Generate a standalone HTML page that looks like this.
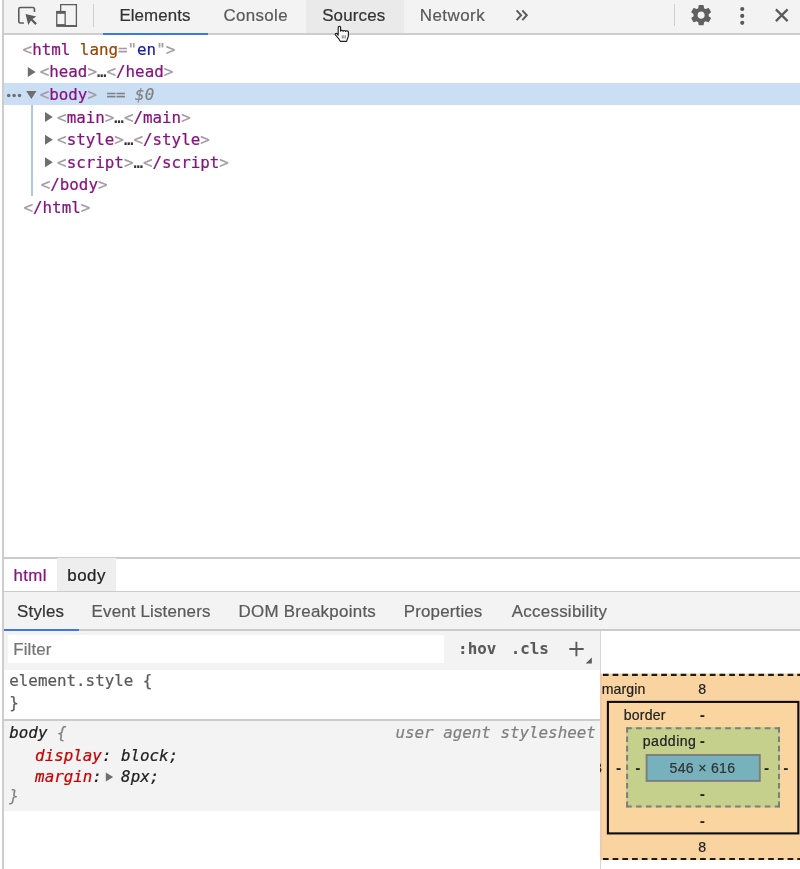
<!DOCTYPE html>
<html lang="en">
<head>
<meta charset="utf-8">
<title>DevTools</title>
<style>
html,body{margin:0;padding:0;}
body{width:800px;height:869px;position:relative;overflow:hidden;background:#fff;
  font-family:"Liberation Sans",Arial,sans-serif;color:#333;}
.abs{position:absolute;}
.mono{font-family:"DejaVu Sans Mono","Liberation Mono",monospace;font-size:15.85px;white-space:pre;line-height:22px;letter-spacing:0;}
.t{position:absolute;white-space:pre;line-height:1;-webkit-text-stroke:0.22px currentColor;}
/* colours */
.tag{color:#881280;}
.br{color:#a698a5;}
.an{color:#994500;}
.av{color:#1a1aa6;}
.gr{color:#5a5a5a;}
/* frame */
#leftline{left:2px;top:0;width:2px;height:869px;background:#cdcdcd;}
#toolbar{left:4px;top:0;width:796px;height:33.4px;background:#f3f3f3;}
#toolbar-b{left:4px;top:33.3px;width:796px;height:1.7px;background:#cdcdcd;}
#hover{left:306.2px;top:0;width:97.8px;height:33.4px;background:#eaeaea;}
.tab{font-size:16.9px;color:#5a5a5a;}
.ul{background:#3b78e7;height:2.6px;}
.vsep{width:1.2px;background:#cfcfcf;}
/* dom tree */
#sel{left:4px;top:83px;width:796px;height:22px;background:#cbdff4;}
#guide{left:30.7px;top:105px;width:2.1px;height:90.600px;background:#b4c3ec;}
.row{position:absolute;height:22px;}
.tri{position:absolute;width:0;height:0;}
.hy{font-weight:bold;}
/* lower */
.hline{height:1.5px;background:#cbcbcb;left:4px;width:796px;}
</style>
</head>
<body>
<div id="root" style="position:absolute;left:0;top:0;width:800px;height:869px;will-change:transform;">
<div id="leftline" class="abs"></div>

<!-- main toolbar -->
<div id="toolbar" class="abs"></div>
<div id="hover" class="abs"></div>
<div id="toolbar-b" class="abs"></div>
<div class="abs ul" style="left:103px;top:32.5px;width:105px;"></div>

<!-- inspect icon -->
<svg class="abs" style="left:12px;top:0" width="40" height="32" viewBox="12 0 40 32">
  <path d="M34.450 12V9.100a1.550 1.550 0 0 0-1.550-1.550H20.350a1.550 1.550 0 0 0-1.550 1.550v12.300a1.550 1.550 0 0 0 1.550 1.550h3.550" fill="none" stroke="#5c5c5c" stroke-width="1.600"/>
  <path d="M25.500 14L36.300 16.400L32.500 19L36.900 23.300L35.300 24.900L31 20.600L28.300 24.900Z" fill="#5c5c5c"/>
</svg>
<!-- device icon -->
<svg class="abs" style="left:52px;top:0" width="30" height="32" viewBox="52 0 30 32">
  <path d="M60.650 11.500V4.550H76.400V26H65" fill="none" stroke="#5c5c5c" stroke-width="1.300"/>
  <rect x="65" y="25" width="12.050" height="1.900" fill="#5c5c5c"/>
  <rect x="56.100" y="10.900" width="9.700" height="16" fill="#5c5c5c"/>
  <rect x="57.400" y="13.800" width="7.100" height="10.300" fill="#f6f6f6"/>
</svg>
<div class="abs vsep" style="left:92.900px;top:4px;height:22.900px;"></div>

<div class="t tab" style="left:119.400px;top:7.9px;color:#333;letter-spacing:.1px;">Elements</div>
<div class="t tab" style="left:223.400px;top:7.9px;letter-spacing:.38px;">Console</div>
<div class="t tab" style="left:322.200px;top:7.9px;color:#333;letter-spacing:.17px;">Sources</div>
<div class="t tab" style="left:419.700px;top:7.9px;letter-spacing:.5px;">Network</div>
<!-- chevrons -->
<svg class="abs" style="left:510px;top:4px" width="24" height="24" viewBox="510 4 24 24">
  <path d="M516.600 10.400l4.500 4.850-4.500 4.850M522.300 10.400l4.500 4.850-4.500 4.850" fill="none" stroke="#5c5c5c" stroke-width="2"/>
</svg>
<div class="abs vsep" style="left:674.3px;top:4px;height:22px;"></div>
<!-- gear -->
<svg class="abs" style="left:689.2px;top:2.9px" width="24.3" height="24.3" viewBox="0 0 24 24">
  <path fill="#606060" d="M19.43 12.98c.04-.32.07-.64.07-.98s-.03-.66-.07-.98l2.11-1.65c.19-.15.24-.42.12-.64l-2-3.46c-.12-.22-.39-.3-.61-.22l-2.49 1c-.52-.4-1.08-.73-1.69-.98l-.38-2.65A.488.488 0 0 0 14 2h-4c-.25 0-.46.18-.49.42l-.38 2.65c-.61.25-1.17.59-1.69.98l-2.49-1c-.23-.09-.49 0-.61.22l-2 3.46c-.13.22-.07.49.12.64l2.11 1.65c-.04.32-.07.65-.07.98s.03.66.07.98l-2.11 1.65c-.19.15-.24.42-.12.64l2 3.46c.12.22.39.3.61.22l2.49-1c.52.4 1.08.73 1.69.98l.38 2.65c.03.24.24.42.49.42h4c.25 0 .46-.18.49-.42l.38-2.65c.61-.25 1.17-.59 1.69-.98l2.49 1c.23.09.49 0 .61-.22l2-3.46c.12-.22.07-.49-.12-.64l-2.11-1.65zM12 15.5c-1.93 0-3.5-1.57-3.5-3.5s1.570-3.5 3.5-3.5 3.500 1.570 3.500 3.500-1.570 3.500-3.500 3.500z"/>
</svg>
<!-- kebab -->
<svg class="abs" style="left:730px;top:0" width="70" height="32" viewBox="730 0 70 32">
  <g fill="#5a5a5a"><circle cx="742.250" cy="9" r="2.100"/><circle cx="742.250" cy="15.900" r="2.100"/><circle cx="742.250" cy="22.800" r="2.100"/></g>
  <path d="M775.900 9.400l11.700 11.700M787.600 9.400l-11.700 11.700" fill="none" stroke="#5a5a5a" stroke-width="2.200"/>
</svg>
<!-- hand cursor -->
<svg class="abs" style="left:330px;top:22px" width="24" height="24" viewBox="330 22 24 24">
  <path d="M338.200 35.200V27.500a1.200 1.200 0 0 1 2.400 0V31.200c0-1.200 2.500-1.200 2.500 0.100c0-1.100 2.500-1.100 2.500 0.200c0-1 2.800-1 2.800 0.500V35.500c0 2.200-1.400 3.600-1.800 5.800H340.300c-1.200-2.200-3-4.300-4.700-6.100c-1-1.200 0.400-2.300 1.600-1.400z" fill="#fff" stroke="#1e1e1e" stroke-width="1.150" stroke-linejoin="round"/>
  <path d="M342.300 35.300v3.200M343.800 35.300v3.200M345.300 35.300v3.200" stroke="#6a6a6a" stroke-width=".800"/>
</svg>

<!-- DOM tree -->
<div id="sel" class="abs"></div>
<div id="guide" class="abs"></div>
<svg class="abs" style="left:0;top:0" width="100" height="220" viewBox="0 0 100 220">
  <g fill="#6e6e6e">
    <path d="M27.800 67.100v10l7.800-5z"/>
    <path d="M26.200 91h10.300l-5.150 8.100z"/>
    <circle cx="8.700" cy="95.400" r="1.750"/><circle cx="14.100" cy="95.400" r="1.750"/><circle cx="19.500" cy="95.400" r="1.750"/>
    <path d="M45 112.100v10l7.800-5z"/>
    <path d="M45 134.700v10l7.800-5z"/>
    <path d="M45 157.300v10l7.800-5z"/>
  </g>
</svg>

<div class="t mono" style="left:22.6px;top:41.8px;"><span class="br">&lt;</span><span class="tag">html </span><span class="an">lang</span><span class="br">="</span><span class="av">en</span><span class="br">"&gt;</span></div>

<div class="t mono" style="left:39.7px;top:64.4px;"><span class="br">&lt;</span><span class="tag">head</span><span class="br">&gt;</span><span style="color:#333">…</span><span class="br">&lt;</span><span class="tag">/head</span><span class="br">&gt;</span></div>

<div class="t mono" style="left:39.7px;top:87.0px;"><span class="br">&lt;</span><span class="tag">body</span><span class="br">&gt;</span><span style="color:#808080"> == <i>$0</i></span></div>

<div class="t mono" style="left:57.1px;top:109.6px;"><span class="br">&lt;</span><span class="tag">main</span><span class="br">&gt;</span><span style="color:#333">…</span><span class="br">&lt;</span><span class="tag">/main</span><span class="br">&gt;</span></div>

<div class="t mono" style="left:57.1px;top:132.2px;"><span class="br">&lt;</span><span class="tag">style</span><span class="br">&gt;</span><span style="color:#333">…</span><span class="br">&lt;</span><span class="tag">/style</span><span class="br">&gt;</span></div>

<div class="t mono" style="left:57.1px;top:154.8px;"><span class="br">&lt;</span><span class="tag">script</span><span class="br">&gt;</span><span style="color:#333">…</span><span class="br">&lt;</span><span class="tag">/script</span><span class="br">&gt;</span></div>

<div class="t mono" style="left:40.7px;top:177.4px;"><span class="br">&lt;</span><span class="tag">/body</span><span class="br">&gt;</span></div>
<div class="t mono" style="left:23.5px;top:200.0px;"><span class="br">&lt;</span><span class="tag">/html</span><span class="br">&gt;</span></div>

<!-- breadcrumbs -->
<div class="abs hline" style="top:557px;"></div>
<div class="abs" style="left:57.200px;top:558px;width:58.800px;height:33.500px;background:#eeeeee;"></div>
<div class="t tab" style="left:13.400px;top:567.600px;color:#881280;letter-spacing:.4px;">html</div>
<div class="t tab" style="left:67.300px;top:567.600px;color:#222;letter-spacing:.5px;">body</div>
<div class="abs hline" style="top:590.900px;"></div>

<!-- sidebar tabs -->
<div class="abs" style="left:4px;top:592.300px;width:796px;height:37.500px;background:#f3f3f3;"></div>
<div class="abs hline" style="top:629.200px;"></div>
<div class="abs ul" style="left:4px;top:628.500px;width:75px;"></div>
<div class="t tab" style="left:17.100px;top:604px;color:#333;letter-spacing:.18px;">Styles</div>
<div class="t tab" style="left:91.600px;top:604px;letter-spacing:.17px;">Event Listeners</div>
<div class="t tab" style="left:238.600px;top:604px;letter-spacing:.28px;">DOM Breakpoints</div>
<div class="t tab" style="left:403.800px;top:604px;letter-spacing:.17px;">Properties</div>
<div class="t tab" style="left:511.800px;top:604px;letter-spacing:.27px;">Accessibility</div>

<!-- styles pane -->
<div class="abs" style="left:4px;top:631px;width:596.500px;height:38.500px;background:#f3f3f3;"></div>
<div class="abs" style="left:7.500px;top:635px;width:436.300px;height:28px;background:#fff;"></div>
<div class="t tab" style="left:13.300px;top:642.100px;color:#757575;letter-spacing:.1px;">Filter</div>
<div class="t mono" style="left:458.100px;top:641.400px;font-weight:bold;color:#5a5a5a;-webkit-text-stroke:0.1px;">:hov</div>
<div class="t mono" style="left:510.700px;top:641.400px;font-weight:bold;color:#5a5a5a;-webkit-text-stroke:0.1px;">.cls</div>
<svg class="abs" style="left:566.200px;top:639.300px" width="28" height="28" viewBox="0 0 28 28">
  <path d="M10.400 2.800v14.500M3.300 10h14.400" fill="none" stroke="#5a5a5a" stroke-width="1.900"/>
  <path d="M25.800 18.600v5.900h-6.100z" fill="#5a5a5a"/>
</svg>

<div class="t mono" style="left:9.300px;top:672.900px;color:#5a5a5a;">element.style {</div>
<div class="t mono" style="left:9.300px;top:695.200px;color:#5a5a5a;">}</div>

<div class="abs" style="left:4px;top:719.300px;width:596.500px;height:1.400px;background:#cbcbcb;"></div>
<div class="abs" style="left:4px;top:720.700px;width:596.500px;height:90.400px;background:#f3f3f3;"></div>
<div class="t mono" style="left:9.300px;top:725.100px;font-style:italic;color:#222;">body <span style="color:#808080">{</span></div>
<div class="t mono" style="left:395.500px;top:725.100px;font-style:italic;color:#808080;">user agent stylesheet</div>
<div class="t mono" style="left:35.100px;top:748.100px;font-style:italic;color:#222;"><span style="color:#c80000">display</span>: block;</div>
<div class="t mono" style="left:35.100px;top:768.700px;font-style:italic;color:#222;"><span style="color:#c80000">margin</span>:</div>
<svg class="abs" style="left:100px;top:770px" width="20" height="14" viewBox="100 770 20 14"><path d="M105.800 772.600v9l7.300-4.500z" fill="#6e6e6e"/></svg>
<div class="t mono" style="left:121.100px;top:768.700px;font-style:italic;color:#222;">8px;</div>
<div class="t mono" style="left:9.300px;top:788.400px;font-style:italic;color:#808080;">}</div>

<!-- splitter -->
<div class="abs" style="left:599.600px;top:630.700px;width:1.500px;height:239px;background:#d6d6d6;"></div>

<!-- box model -->
<svg class="abs" style="left:600px;top:670px" width="200" height="199" viewBox="600 670 200 199">
  <rect x="600.600" y="673.600" width="210" height="186.500" fill="#fad4a0"/>
  <rect x="600.600" y="673.600" width="1" height="186.500" fill="#f0b0a0" opacity=".55"/>
  <path d="M602.900 674.900H810M602.900 859H810" fill="none" stroke="#1c1c1c" stroke-width="2.100" stroke-dasharray="5.700 4.020"/>
  <rect x="607.900" y="701.900" width="190.450" height="131.500" fill="#fad5a0" stroke="#0c0c0c" stroke-width="2.100"/>
  <rect x="626.100" y="727.200" width="153.900" height="80.300" fill="#c4d08b"/>
  <path d="M626.200 728.200H780M626.200 806.500H780" fill="none" stroke="#7e7e7e" stroke-width="2.050" stroke-dasharray="5.600 4.300"/>
  <path d="M627.100 727.300V807.500M779 727.300V807.500" fill="none" stroke="#7e7e7e" stroke-width="2.050" stroke-dasharray="5.600 3.700" stroke-dashoffset="0.100"/>
  <rect x="646.600" y="755" width="113.200" height="25.900" fill="#77b1bb" stroke="#7e7e7e" stroke-width="1.950"/>
</svg>
<div id="metrics" class="abs" style="left:600.400px;top:673px;width:199.600px;height:187px;overflow:hidden;font-size:14.100px;color:#222;">
  <div class="t" style="left:1.300px;top:8.900px;letter-spacing:.1px;">margin</div>
  <div class="t" style="left:97.900px;top:8.500px;">8</div>
  <div class="t" style="left:97.900px;top:167px;">8</div>
  <div class="t" style="left:-6.500px;top:88px;">8</div>
  <div class="t" style="left:23.400px;top:34.700px;letter-spacing:.2px;">border</div>
  <div class="t hy" style="left:99.600px;top:35.200px;">-</div>
  <div class="t hy" style="left:99.500px;top:141.300px;">-</div>
  <div class="t hy" style="left:15.800px;top:88.400px;">-</div>
  <div class="t hy" style="left:183.200px;top:88.400px;">-</div>
  <div class="t" style="left:42.400px;top:60.800px;letter-spacing:.5px;">padding</div>
  <div class="t hy" style="left:99.600px;top:61.100px;">-</div>
  <div class="t hy" style="left:99.500px;top:114px;">-</div>
  <div class="t hy" style="left:35px;top:88.400px;">-</div>
  <div class="t hy" style="left:163.900px;top:88.400px;">-</div>
  <div class="t" style="left:69.200px;top:88px;color:#333;letter-spacing:.3px;">546 × 616</div>
</div>
</div>
</body>
</html>
